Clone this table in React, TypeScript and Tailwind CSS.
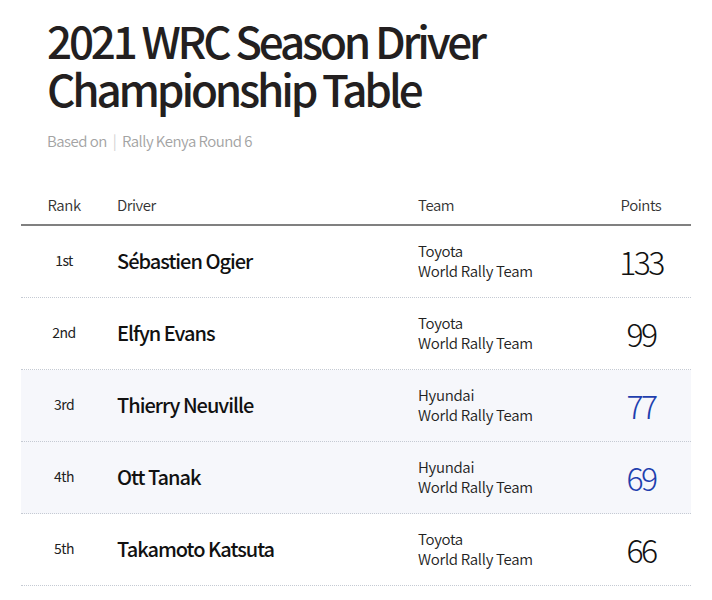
const font = { fontFamily: '"Noto Sans CJK KR", "Noto Sans", sans-serif' };

type Row = {
  rank: string;
  driver: string;
  team: string;
  points: number;
  hyundai?: boolean;
};

const rows: Row[] = [
  { rank: "1st", driver: "Sébastien Ogier", team: "Toyota", points: 133 },
  { rank: "2nd", driver: "Elfyn Evans", team: "Toyota", points: 99 },
  { rank: "3rd", driver: "Thierry Neuville", team: "Hyundai", points: 77, hyundai: true },
  { rank: "4th", driver: "Ott Tanak", team: "Hyundai", points: 69, hyundai: true },
  { rank: "5th", driver: "Takamoto Katsuta", team: "Toyota", points: 66 },
];

export default function App() {
  return (
    <div className="min-h-[600px] w-[712px] bg-white" style={font}>
      <div className="pt-[16px] pl-[47px]">
        <h1 className="text-[44px] leading-[48px] font-medium tracking-[-0.072em] text-[#231f20]">
          2021 WRC Season Driver
          <br />
          Championship Table
        </h1>
        <p className="mt-[19px] text-[15px] leading-5 font-[350] tracking-[-0.035em] text-[#a3a3a3]">
          Based on <span className="mx-[3px] text-[#d0d0d0]">|</span> Rally Kenya Round 6
        </p>
      </div>

      <div className="mx-[21px] mt-[30px] w-[670px]">
        <div className="flex h-[45px] items-end border-b-2 border-[#808080] pb-[8px] text-[15px] font-[350] tracking-[-0.03em] text-[#333]">
          <div className="w-[86px] text-center">Rank</div>
          <div className="w-[311px] pl-[10px]">Driver</div>
          <div className="flex-1">Team</div>
          <div className="w-[100px] text-center">Points</div>
        </div>
        {rows.map((r) => (
          <div
            key={r.rank}
            className={`flex h-[72px] items-center border-b border-dotted border-[#c5cad3] ${
              r.hyundai ? "bg-[#f6f7fb]" : "bg-white"
            }`}
          >
            <div className="-mt-[2px] w-[86px] text-center text-[14px] tracking-[-0.04em] text-[#222]">
              {r.rank}
            </div>
            <div className="-mt-[2px] w-[311px] pl-[10px] text-[20px] font-medium tracking-[-0.05em] text-[#111]">
              {r.driver}
            </div>
            <div className="-mt-[1px] flex-1 text-[15px] leading-[20px] font-[350] tracking-[-0.02em] text-[#222]">
              {r.team}
              <br />
              World Rally Team
            </div>
            <div
              className={`-mt-[2px] w-[100px] text-center text-[32px] leading-[40px] font-light tracking-[-0.08em] ${
                r.hyundai ? "text-[#1f3fae]" : "text-[#111]"
              }`}
            >
              {r.points}
            </div>
          </div>
        ))}
      </div>
    </div>
  );
}
